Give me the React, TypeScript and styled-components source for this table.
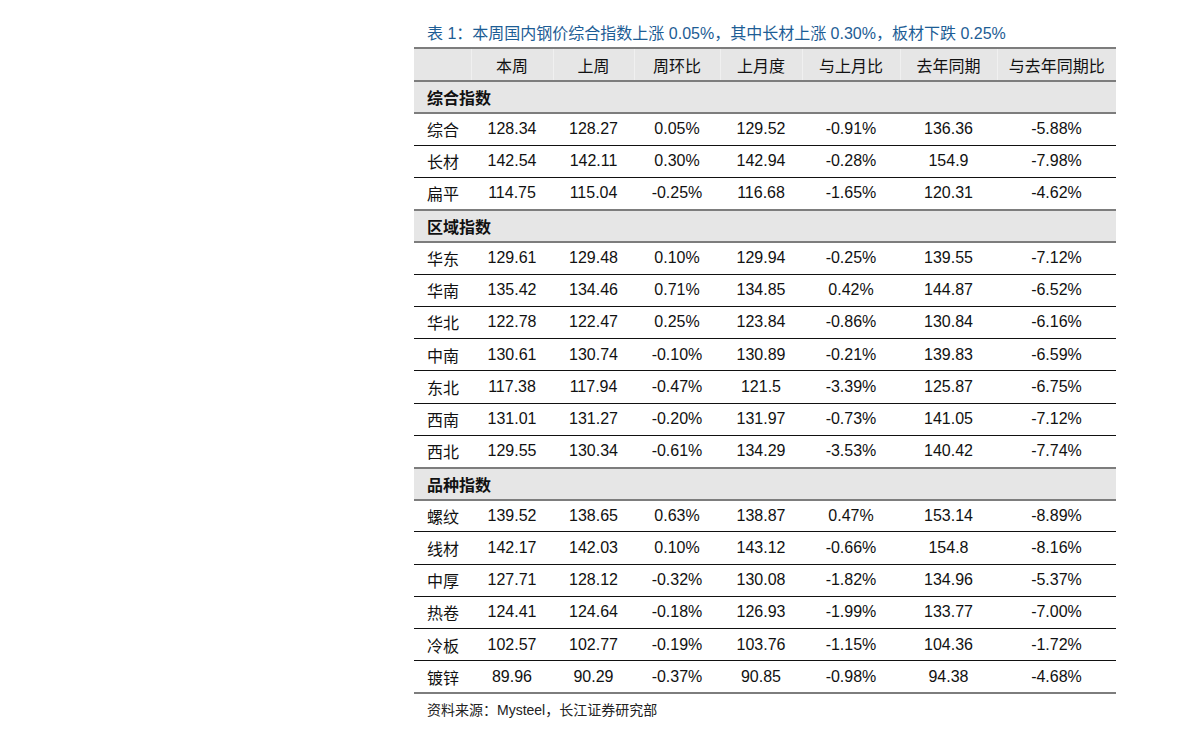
import React from 'react';
import styled, { createGlobalStyle } from 'styled-components';

const GlobalStyle = createGlobalStyle`
  html, body {
    margin: 0;
    padding: 0;
    background: #ffffff;
  }
  body {
    font-family: "Liberation Sans", Arial, "Noto Sans CJK SC", sans-serif;
    color: #111111;
  }
`;

type Row = [string, string, string, string, string, string, string, string];

interface ISection {
  title: string;
  rows: Row[];
}

const columns = ['', '本周', '上周', '周环比', '上月度', '与上月比', '去年同期', '与去年同期比'];
const widths = [57, 82, 81, 86, 82, 98, 97, 119];

const sections: ISection[] = [
  {
    title: '综合指数',
    rows: [
      ['综合', '128.34', '128.27', '0.05%', '129.52', '-0.91%', '136.36', '-5.88%'],
      ['长材', '142.54', '142.11', '0.30%', '142.94', '-0.28%', '154.9', '-7.98%'],
      ['扁平', '114.75', '115.04', '-0.25%', '116.68', '-1.65%', '120.31', '-4.62%'],
    ],
  },
  {
    title: '区域指数',
    rows: [
      ['华东', '129.61', '129.48', '0.10%', '129.94', '-0.25%', '139.55', '-7.12%'],
      ['华南', '135.42', '134.46', '0.71%', '134.85', '0.42%', '144.87', '-6.52%'],
      ['华北', '122.78', '122.47', '0.25%', '123.84', '-0.86%', '130.84', '-6.16%'],
      ['中南', '130.61', '130.74', '-0.10%', '130.89', '-0.21%', '139.83', '-6.59%'],
      ['东北', '117.38', '117.94', '-0.47%', '121.5', '-3.39%', '125.87', '-6.75%'],
      ['西南', '131.01', '131.27', '-0.20%', '131.97', '-0.73%', '141.05', '-7.12%'],
      ['西北', '129.55', '130.34', '-0.61%', '134.29', '-3.53%', '140.42', '-7.74%'],
    ],
  },
  {
    title: '品种指数',
    rows: [
      ['螺纹', '139.52', '138.65', '0.63%', '138.87', '0.47%', '153.14', '-8.89%'],
      ['线材', '142.17', '142.03', '0.10%', '143.12', '-0.66%', '154.8', '-8.16%'],
      ['中厚', '127.71', '128.12', '-0.32%', '130.08', '-1.82%', '134.96', '-5.37%'],
      ['热卷', '124.41', '124.64', '-0.18%', '126.93', '-1.99%', '133.77', '-7.00%'],
      ['冷板', '102.57', '102.77', '-0.19%', '103.76', '-1.15%', '104.36', '-1.72%'],
      ['镀锌', '89.96', '90.29', '-0.37%', '90.85', '-0.98%', '94.38', '-4.68%'],
    ],
  },
];

export default function App() {
  return (
    <>
      <GlobalStyle />
      <Page>
        <Caption>表 1：本周国内钢价综合指数上涨 0.05%，其中长材上涨 0.30%，板材下跌 0.25%</Caption>
        <Table>
          <colgroup>
            {widths.map((w, i) => (
              <col key={i} style={{ width: w }} />
            ))}
          </colgroup>
          <thead>
            <HeadRow>
              {columns.map((c, i) => (
                <HeadCell key={i}>{c}</HeadCell>
              ))}
            </HeadRow>
          </thead>
          <tbody>
            {sections.map((s) => (
              <React.Fragment key={s.title}>
                <SectionRow>
                  <SectionCell colSpan={8}>{s.title}</SectionCell>
                </SectionRow>
                {s.rows.map((r, ri) => (
                  <DataRow key={r[0]} $last={ri === s.rows.length - 1}>
                    {r.map((v, i) =>
                      i === 0 ? <LabelCell key={i}>{v}</LabelCell> : <ValueCell key={i}>{v}</ValueCell>
                    )}
                  </DataRow>
                ))}
              </React.Fragment>
            ))}
          </tbody>
        </Table>
        <Source>资料来源：Mysteel，长江证券研究部</Source>
      </Page>
    </>
  );
}

const Page = styled.div`
  width: 702px;
  margin-left: 414px;
  padding-top: 24px;
`;

const Caption = styled.div`
  font-family: "Liberation Sans", Arial, "Noto Sans CJK SC", sans-serif;
  font-size: 16px;
  line-height: 20px;
  color: #1d5d95;
  padding-left: 13px;
  margin-bottom: 3px;
  white-space: nowrap;
`;

const Table = styled.table`
  width: 702px;
  table-layout: fixed;
  border-collapse: collapse;
  font-family: "Liberation Sans", Arial, "Noto Sans CJK SC", sans-serif;
  font-size: 16px;
  color: #111111;
`;

const HeadRow = styled.tr`
  height: 33px;
  background: #e6e6e6;
  border-top: 2px solid #7d7d7d;
  border-bottom: 2px solid #7d7d7d;
`;

const HeadCell = styled.th`
  font-weight: normal;
  text-align: center;
  padding: 0;
  border-left: 1px solid #f0f0f0;
  &:first-child {
    border-left: none;
  }
`;

const SectionRow = styled.tr`
  height: 32px;
  background: #e6e6e6;
  border-top: 2px solid #7d7d7d;
  border-bottom: 2px solid #7d7d7d;
`;

const SectionCell = styled.td`
  font-weight: bold;
  padding: 0 0 0 13px;
  text-align: left;
`;

const DataRow = styled.tr<{ $last: boolean }>`
  height: 32.25px;
  border-bottom: ${(p) => (p.$last ? '2px solid #7d7d7d' : '1px solid #111111')};
`;

const LabelCell = styled.td`
  padding: 0 0 0 13px;
  text-align: left;
  white-space: nowrap;
`;

const ValueCell = styled.td`
  padding: 0;
  text-align: center;
  white-space: nowrap;
`;

const Source = styled.div`
  font-family: "Liberation Sans", Arial, "Noto Sans CJK SC", sans-serif;
  font-size: 14px;
  line-height: 18px;
  color: #222222;
  padding-left: 13px;
  margin-top: 7px;
`;
